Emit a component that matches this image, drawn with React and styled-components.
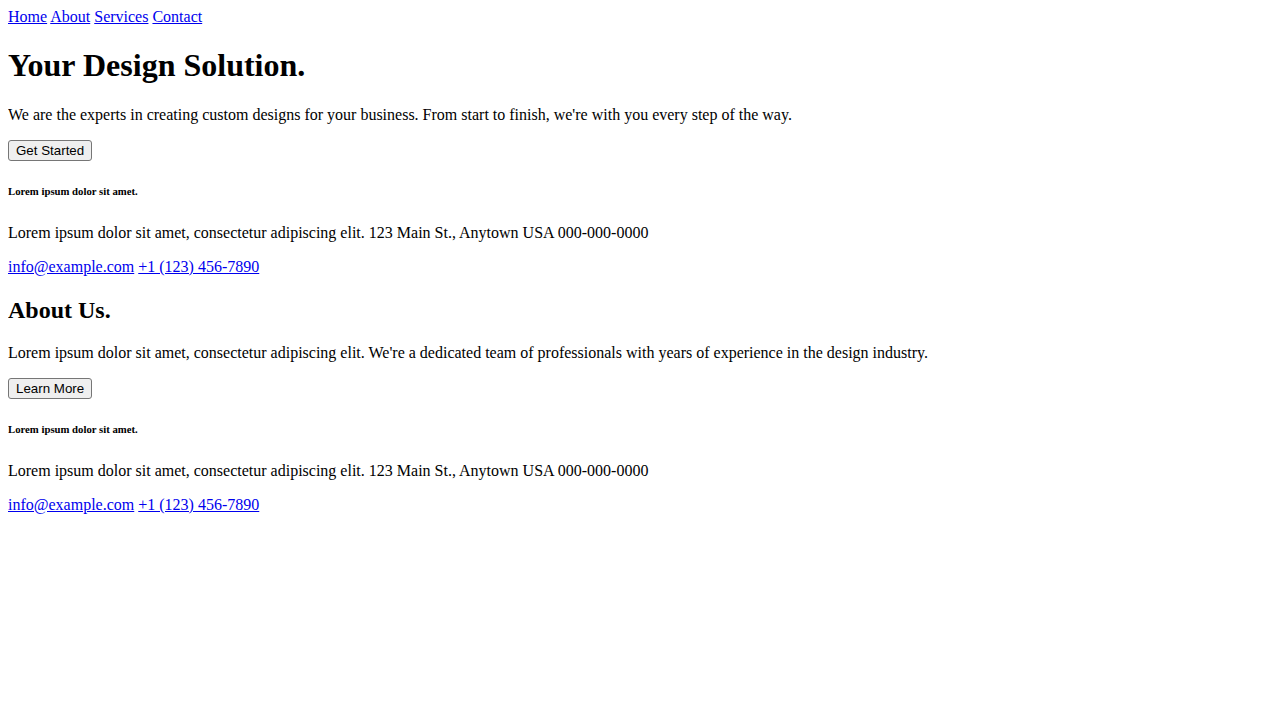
import React from "react";
import styled, { createGlobalStyle } from "styled-components";

const GlobalStyle = createGlobalStyle`
  body {
    margin: 8px;
    font-family: "Liberation Serif", "Times New Roman", serif;
    font-size: 16px;
    color: #000;
    background: #fff;
  }
`;

const Nav = styled.nav`
  display: block;
`;

const Link = styled.a`
  color: #0000ee;
  text-decoration: underline;
  cursor: pointer;
`;

const Title = styled.h1`
  font-size: 2em;
  font-weight: bold;
  margin: 0.67em 0;
`;

const SectionTitle = styled.h2`
  font-size: 1.5em;
  font-weight: bold;
  margin: 21px 0 20px;
`;

const Tiny = styled.h6`
  font-size: 0.67em;
  font-weight: bold;
  margin: 24px 0 27px;
`;

const Text = styled.p`
  margin: 1em 0;
`;

const Button = styled.button`
  box-sizing: border-box;
  height: 21px;
  font-family: "Liberation Sans", Arial, sans-serif;
  font-size: 13.3333px;
  color: #000;
  background-color: #efefef;
  border: 1px solid #767676;
  border-radius: 3px;
  padding: 0 7px;
  margin: 0;
  line-height: normal;
  cursor: pointer;
`;

const Section = styled.section`
  display: block;
`;

const Footer = styled.footer`
  display: block;
`;

function Contact() {
  return (
    <Footer>
      <Tiny>Lorem ipsum dolor sit amet.</Tiny>
      <Text>
        Lorem ipsum dolor sit amet, consectetur adipiscing elit. 123 Main St.,
        Anytown USA 000-000-0000
      </Text>
      <Text>
        <Link href="#">info@example.com</Link>{" "}
        <Link href="#">+1 (123) 456-7890</Link>
      </Text>
    </Footer>
  );
}

export default function App() {
  return (
    <>
      <GlobalStyle />
      <Nav>
        <Link href="#">Home</Link> <Link href="#">About</Link>{" "}
        <Link href="#">Services</Link> <Link href="#">Contact</Link>
      </Nav>
      <Section>
        <Title>Your Design Solution.</Title>
        <Text>
          We are the experts in creating custom designs for your business. From
          start to finish, we're with you every step of the way.
        </Text>
        <Button>Get Started</Button>
        <Contact />
      </Section>
      <Section>
        <SectionTitle>About Us.</SectionTitle>
        <Text>
          Lorem ipsum dolor sit amet, consectetur adipiscing elit. We're a
          dedicated team of professionals with years of experience in the design
          industry.
        </Text>
        <Button>Learn More</Button>
        <Contact />
      </Section>
    </>
  );
}
